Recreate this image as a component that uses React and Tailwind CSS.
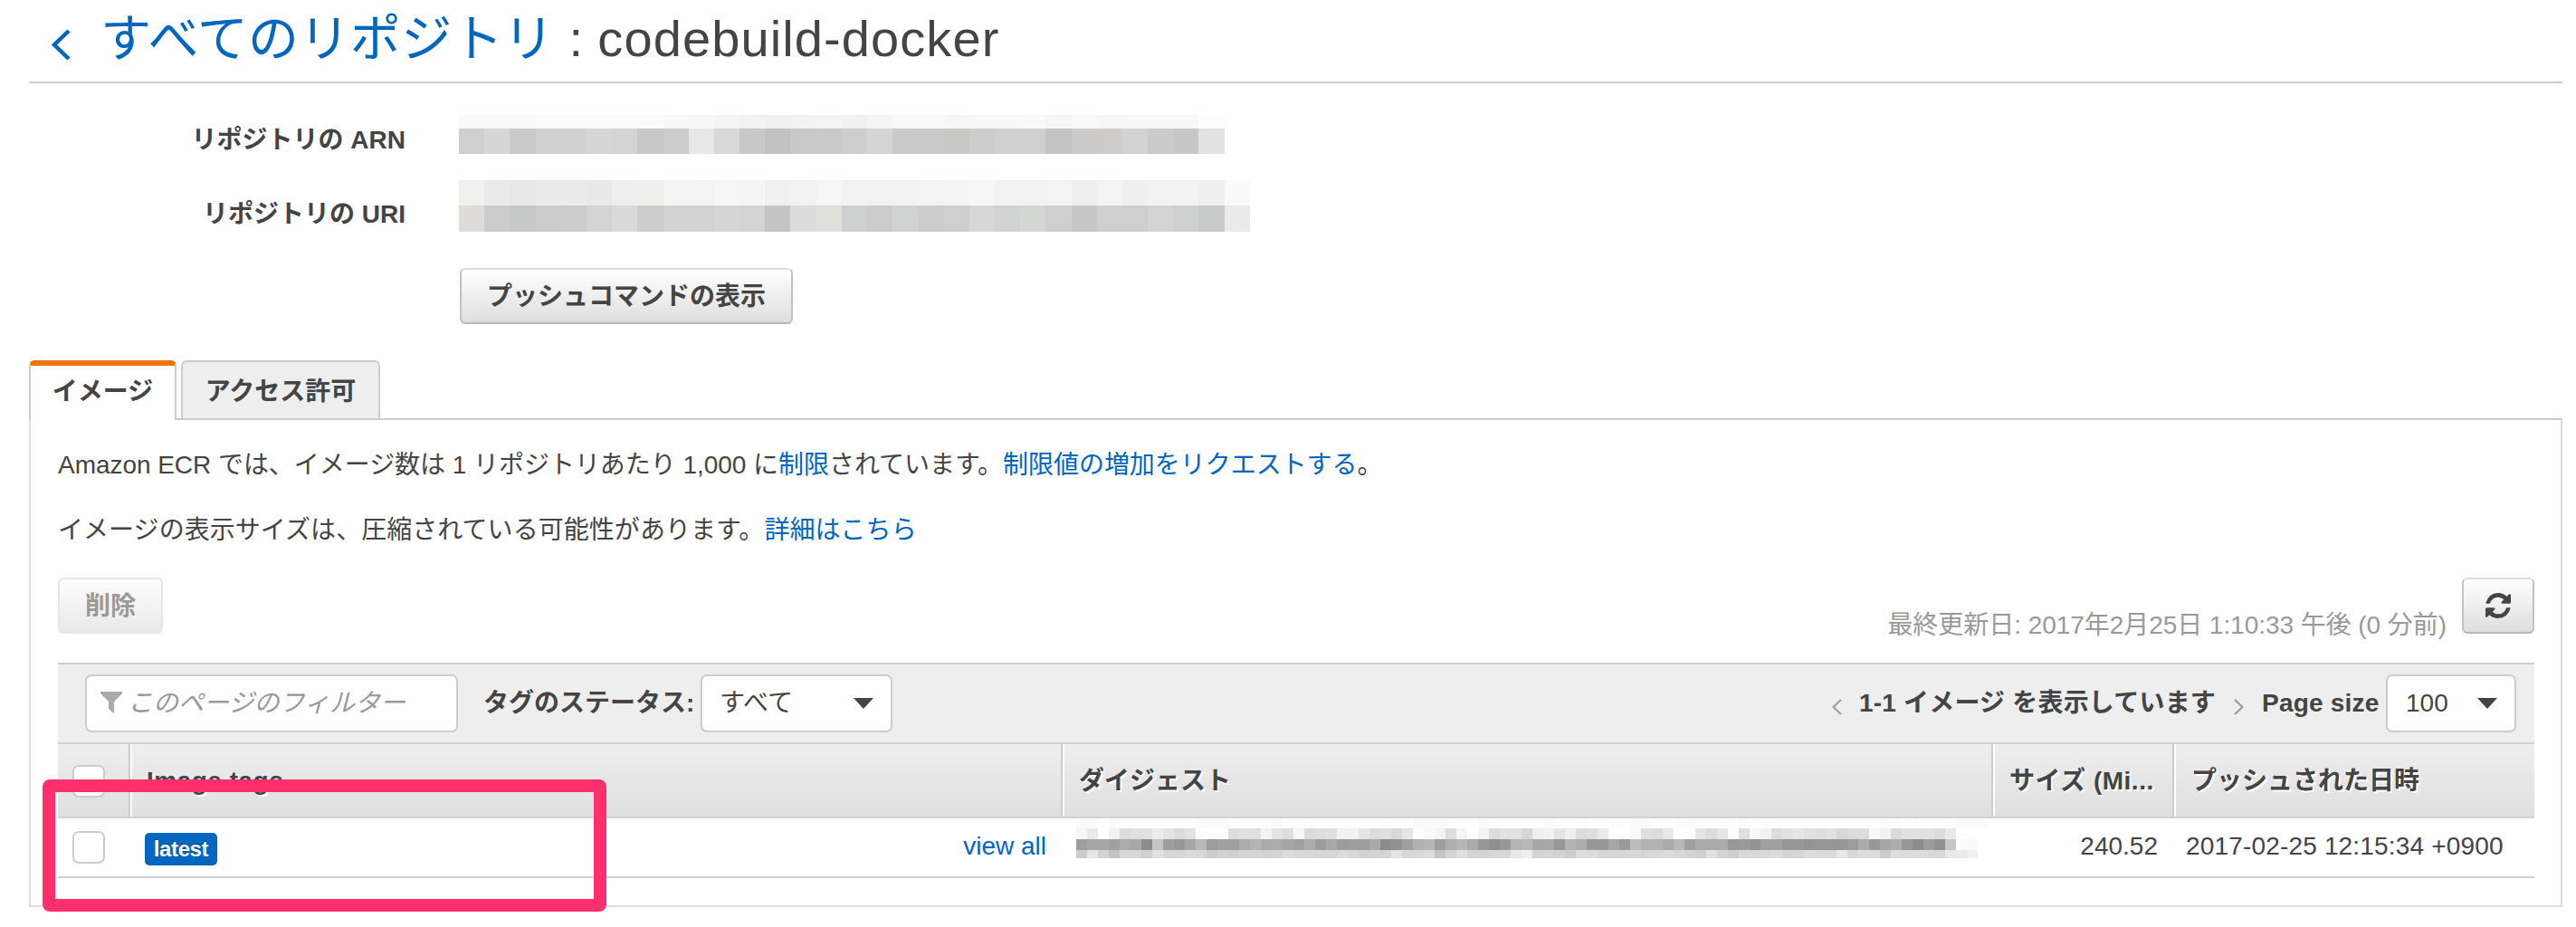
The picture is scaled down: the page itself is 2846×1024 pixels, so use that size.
import React from "react";

const arnTop = "fafafa fafafa fafafa fafcfb fbfbfb fbfbfb fbfbfb fbfbfb f8f8f8 f7f7f7 f5f5f5 f2f2f2 f0f0f0 f2f2f2 f4f4f4 f1f1f1 f5f5f5 f9fbfa fafafa f6f6f6 f8f8f8 f8f8f8 f9f9f9 f6f6f6 fafafa f7f7f7 f8f8f8 f8f8f8 f8f8f8 fcfcfc".split(" ");
const arnMain = "cfcfcf d6d6d6 c9c9c9 d0d0d0 d0d0d0 d6d6d6 d4d4d4 c8c8c8 cdcdcd e5e8e6 d8d8d8 c8c8c8 c2c2c2 c9c9c9 c9c9c9 cecece d5d5d5 c9c9c9 c9c9c9 c9c8c4 cdcdcd d0d0d0 ced1cf c3c3c3 cbcbcb cecbc8 d3d3d3 cbcbcb c7c7c7 e2e2e2".split(" ");
const uriTop = "f0f0ed eaeaea e8e8e8 ebebeb ebebeb e9e9e9 eeeeee efefec f4f4f4 f3f3f3 f6f6f6 f5f5f5 f0f0f0 f2f2f2 f6f6f6 f2f2f2 f2f2f2 f2f2f2 f3f3f3 f4f4f4 f6f6f6 f2f2f2 f2f2f2 f3f3f3 eeeeee f3f3f3 efefef f2f2f2 f2f2f2 efefef fafafa".split(" ");
const uriMain = "dddcd9 cccccc c6c9c7 cccccc cdcdcd d4d4d4 dadada cdcdcd d3d3d3 d3d3d3 d6d6d6 d4d4d4 c5c5c5 dcdcdc dfdfdb cdd0ce cccccc d0d3d1 cccccc cfcfcf d7d7d7 d0d3d1 d5d7d5 cfcfcf c7c7c7 cfcfcf cfcfcf d4d4d4 cdd0ce c8cbc9 ebebeb".split(" ");

const grays = (s) => s.split(" ").map((v) => v + v + v);
const digFaint = grays("fa fa fd fa ff ff ff fe fe fe fe fb fa fa fd ff ff fe fb fe fe fd fe fe fe ff ff ff fd fe ff fa fa fa fc fe ff fb fd ff fe fe ff fb fd ff fc ff ff fd fd fb fb ff ff fc fb fe ff fd ff fc ff fd fe ff ff ff fe ff ff ff ff ff fb fc ff fd ff ff fd fa fa fa");
const digUpper = grays("f6 e9 ff f2 dc e0 e0 ec e4 dc e2 fd fd fd dc e0 e0 f4 e4 de f6 dc de e0 f2 f2 e4 dc df d8 e6 ff f8 f4 dc f4 ff f4 dc e2 e2 d6 ee f2 e4 f0 dc de ea fe fe fa e0 dc e8 fd fd e4 dc e6 ff de f8 f2 dc e2 e6 e0 de e2 d8 dc dc f8 f2 da e0 e2 e2 dc ea fe ff ff");
const digMain = grays("9e a6 a6 a0 ab a8 8c c4 9e 98 a6 b8 9c a0 a0 ac b4 aa ac a6 a0 ac 9c a8 9c 9e 9e aa 8c 92 a0 b0 b6 9e ae b6 aa 98 90 98 b6 b8 a8 a8 98 b4 ac 98 98 a6 9a bc b2 b2 aa b8 9e aa aa aa 98 9a 94 a0 a0 96 98 93 96 96 96 9c ac 98 a8 ae 98 8c 9c 92 c6 fc fa ff");
const digLower = grays("cc e6 d4 c2 d8 d8 d0 e0 d6 d6 da d8 cc d2 d0 d6 d6 d2 d6 dc d8 d8 d6 d6 dc d8 d2 d4 d4 e4 d8 d8 dc c4 d4 de d4 d4 d8 d8 e8 ee d4 d6 d4 cc de dc d6 d6 d6 d8 d6 d8 dc d8 d4 d0 e2 d4 ce d8 d8 d8 dc d6 d6 dc da da e8 d8 dc dc cc de dc dc da d8 e8 ea f0 ff");

function Strip({ colors, cell, height }) {
  return (
    <div className={`flex ${height}`}>
      {colors.map((c, i) => (
        <span
          key={i}
          className={`${cell} h-full shrink-0`}
          style={{ backgroundColor: `#${c}` }}
        />
      ))}
    </div>
  );
}

function Caret() {
  return (
    <svg className="h-[12px] w-[22px]" viewBox="0 0 22 12" fill="#444">
      <path d="M0 0H22L11 12Z" />
    </svg>
  );
}

function Checkbox() {
  return <span className="block size-[36px] rounded-[7px] border-2 border-[#ccc] bg-white" />;
}

const btn =
  "flex h-[62px] items-center justify-center rounded-[6px] border-2 border-t-[#dcdcdc] border-x-[#c2c2c2] border-b-[#b7b7b7] bg-linear-to-b from-white to-[#dedede] font-bold";
const field = "flex h-[64px] items-center rounded-[7px] border-2 border-[#ccc] bg-white";
const headCell =
  "flex h-full items-center border-l-2 border-l-white pt-0.5 font-bold [text-shadow:2px_2px_0_#fff]";

export default function App() {
  return (
    <div className='relative h-[1024px] w-[2846px] overflow-hidden bg-white pr-[15px] pl-8 font-["Liberation_Sans","Noto_Sans_CJK_JP",sans-serif] text-[28px] leading-[40px] whitespace-nowrap text-[#444]'>
      <h1 className="flex h-[92px] border-b-2 border-[#ccc] text-[56px] leading-[85px]">
        <svg
          className="mt-[32px] ml-[24px] h-[35px] w-[22px] shrink-0"
          viewBox="0 0 22 35"
          fill="none"
          stroke="#0066c0"
          strokeWidth="4.5"
        >
          <path d="M20 2L4 17.5L20 33" />
        </svg>
        <a className="ml-[33px] tracking-[0.4px] text-[#0066c0]">すべてのリポジトリ</a>
        <span className="whitespace-pre tracking-[0.4px]"> : </span>
        <span className="tracking-[1.1px]">codebuild-docker</span>
      </h1>

      <section className="mt-[35px]">
        <div className="flex h-[72px]">
          <div className="w-[416px] text-right leading-[55px] font-bold">リポジトリの ARN</div>
          <div className="ml-[59px]">
            <Strip colors={arnTop} cell="w-[28.2px]" height="h-[15px]" />
            <Strip colors={arnMain} cell="w-[28.2px]" height="h-[28px]" />
          </div>
        </div>
        <div className="flex h-[97px]">
          <div className="w-[416px] text-right leading-[75px] font-bold">リポジトリの URI</div>
          <div className="ml-[59px]">
            <Strip colors={uriTop} cell="w-[28.2px]" height="h-[28px]" />
            <Strip colors={uriMain} cell="w-[28.2px]" height="h-[29px]" />
          </div>
        </div>
        <button className={`${btn} ml-[476px] w-[368px] pt-0.5`}>プッシュコマンドの表示</button>
      </section>

      <nav className="mt-10 flex h-[64px] items-start gap-[5px] font-bold">
        <div className="z-10 h-[66px] w-[163px] rounded-t-[6px] border-x-2 border-t-[6px] border-x-[#ccc] border-t-[#ef7300] bg-white text-center leading-[57px]">
          イメージ
        </div>
        <div className="h-[64px] w-[220px] rounded-t-[6px] border-2 border-b-0 border-[#ccc] bg-[#eee] text-center leading-[65px]">
          アクセス許可
        </div>
      </nav>

      <main className="h-[540px] border-2 border-[#ddd] border-t-[#ccc] pr-[29px] pl-[30px]">
        <p className="mt-[30px] tracking-[-0.04px]">
          Amazon ECR では、イメージ数は 1 リポジトリあたり 1,000 に
          <a className="text-[#0066c0]">制限</a>されています。
          <a className="text-[#0066c0]">制限値の増加をリクエストする</a>。
        </p>
        <p className="mt-8 tracking-[0.05px]">
          イメージの表示サイズは、圧縮されている可能性があります。
          <a className="text-[#0066c0]">詳細はこちら</a>
        </p>

        <div className="mt-8 flex h-[62px]">
          <button className="w-[116px] rounded-[6px] border-2 border-[#e6e6e6] bg-linear-to-b from-[#fdfdfd] to-[#e9e9e9] pt-0.5 font-bold text-[#999]">
            削除
          </button>
          <div className="mt-[33px] ml-auto tracking-[-0.05px] text-[#999]">
            最終更新日: 2017年2月25日 1:10:33 午後 (0 分前)
          </div>
          <button className={`${btn} ml-[17px] w-[80px]`}>
            <svg className="size-[28px]" viewBox="0 0 1536 1536" fill="#444">
              <path d="M1511 928q0 5-1 7q-64 268-268 434.500T764 1536q-146 0-282.500-55T238 1324l-129 129q-19 19-45 19t-45-19T0 1408V960q0-26 19-45t45-19h448q26 0 45 19t19 45t-19 45l-137 137q71 66 161 102t187 36q134 0 250-65t186-179q11-17 53-117q8-23 30-23h192q13 0 22.500 9.500t9.500 22.500zm25-800v448q0 26-19 45t-45 19h-448q-26 0-45-19t-19-45t19-45l138-138Q969 256 768 256q-134 0-250 65T332 500q-11 17-53 117q-8 23-30 23H50q-13 0-22.500-9.500T18 608v-7q65-268 270-434.500T768 0q146 0 284 55.500T1297 212l130-129q19-19 45-19t45 19t19 45z" />
            </svg>
          </button>
        </div>

        <section className="mt-8">
          <div className="flex h-[88px] items-center border-t-2 border-[#ccc] bg-[#eee] pr-5 pl-[30px]">
            <div className={`${field} w-[412px] pl-[15px] text-[#999]`}>
              <svg className="mb-0.5 h-[24px] w-[24px]" viewBox="0 0 24 24" fill="#aaa">
                <path d="M0 0H24V2L15 11V24L9 19V11L0 2Z" />
              </svg>
              <span className="ml-1.5 italic">このページのフィルター</span>
            </div>
            <b className="ml-[28px] w-[240px]">タグのステータス:</b>
            <div className={`${field} w-[212px] justify-between pr-[19px] pl-[19px]`}>
              すべて
              <Caret />
            </div>
            <svg
              className="mt-[8px] ml-auto h-[18px] w-[11px]"
              viewBox="0 0 11 18"
              fill="none"
              stroke="#999"
              strokeWidth="2"
            >
              <path d="M10 1L1.500 9L10 17" />
            </svg>
            <b className="ml-[19px] w-[395px] tracking-[0.2px]">1-1 イメージ を表示しています</b>
            <svg
              className="mt-[8px] ml-[19px] h-[18px] w-[11px]"
              viewBox="0 0 11 18"
              fill="none"
              stroke="#999"
              strokeWidth="2"
            >
              <path d="M1 1L9.500 9L1 17" />
            </svg>
            <b className="ml-[20px] w-[137px] tracking-[0.2px]">Page size</b>
            <div className={`${field} w-[144px] justify-between pr-[19px] pl-5`}>
              100
              <Caret />
            </div>
          </div>

          <div className="grid h-[84px] grid-cols-[78px_1030px_1028px_200px_400px] items-center border-y-2 border-[#d2d2d2] bg-linear-to-b from-[#eee] to-[#dfdfdf]">
            <div className="flex h-full items-center pt-0.5 pl-[16px]">
              <Checkbox />
            </div>
            <div className="h-full border-l-2 border-[#ccc]">
              <div className={`${headCell} pl-[16px] tracking-[0.5px]`}>Image tags</div>
            </div>
            <div className="h-full border-l-2 border-[#ccc]">
              <div className={`${headCell} pl-[16px]`}>ダイジェスト</div>
            </div>
            <div className="h-full border-l-2 border-[#ccc]">
              <div className={`${headCell} pl-[16px] tracking-[0.5px]`}>サイズ (Mi...</div>
            </div>
            <div className="h-full border-l-2 border-[#ccc]">
              <div className={`${headCell} pl-[17px]`}>プッシュされた日時</div>
            </div>
          </div>

          <div className="grid h-[66px] grid-cols-[78px_1030px_1028px_200px_400px] items-start border-b-2 border-[#d2d2d2]">
            <div className="pt-[14px] pl-[16px]">
              <Checkbox />
            </div>
            <div className="flex justify-between pr-[16px] pl-[18px]">
              <span className="mt-4 h-[36px] w-[80px] rounded-[5px] bg-[#0066c0] text-center text-[24px] leading-[36px] font-bold tracking-[-0.4px] text-white [text-shadow:0_-1px_0_#00457f]">
                latest
              </span>
              <a className="mt-[11px] text-[#0066c0]">view all</a>
            </div>
            <div className="w-[1028px] overflow-hidden pl-[17px]">
              <Strip colors={digFaint} cell="w-[12px]" height="h-[11px]" />
              <Strip colors={digUpper} cell="w-[12px]" height="h-[12px]" />
              <Strip colors={digMain} cell="w-[12px]" height="h-[12px]" />
              <Strip colors={digLower} cell="w-[12px]" height="h-[9px]" />
            </div>
            <div className="mt-[11px] pr-[16px] text-right">240.52</div>
            <div className="mt-[11px] pl-[15px] tracking-[0.17px]">2017-02-25 12:15:34 +0900</div>
          </div>
        </section>
      </main>

      <div className="absolute top-[861px] left-[47px] z-20 h-[146px] w-[623px] rounded-[8px] border-[14px] border-[#ff2e6c]" />
    </div>
  );
}
